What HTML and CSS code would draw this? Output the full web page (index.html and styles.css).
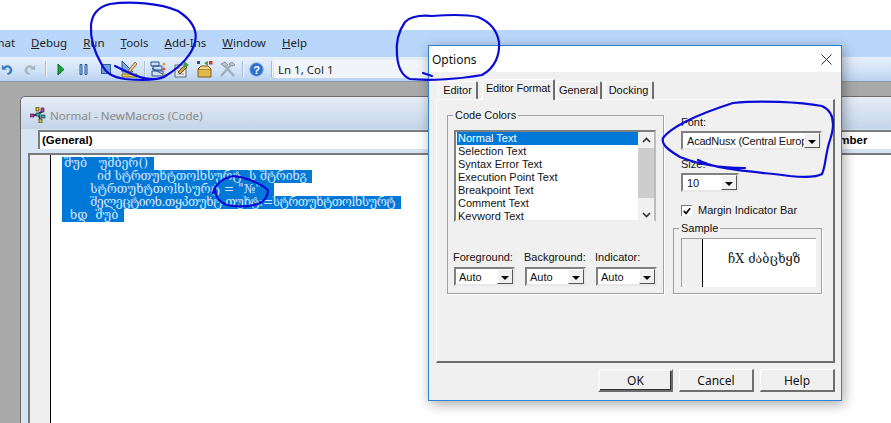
FILE: index.html
```html
<!DOCTYPE html>
<html lang="en">
<head>
<meta charset="utf-8">
<title>Options</title>
<link rel="stylesheet" href="styles.css">
</head>
<body>
<div class="screen">
  <div class="blank"></div>
  <nav class="menubar">
    <span class="menu first"><u>F</u>ormat</span>
    <span class="menu"><u>D</u>ebug</span>
    <span class="menu"><u>R</u>un</span>
    <span class="menu"><u>T</u>ools</span>
    <span class="menu"><u>A</u>dd-Ins</span>
    <span class="menu"><u>W</u>indow</span>
    <span class="menu"><u>H</u>elp</span>
  </nav>
  <div class="toolbar">
    <svg class="tb w-undo" viewBox="0 0 14 16"><path d="M1 3v6h6L5 7c3-2 6 0 5 3-.4 1.500-1.500 2.500-3 3l1 2c4-1 6-4 5-7C12 4 7 2 3.500 5.500L1 3z" fill="#3d7fc6"/></svg>
    <svg class="tb w-redo" viewBox="0 0 14 16"><path d="M13 3v6H7l2-2C6 5 3 7 4 10c.4 1.500 1.500 2.500 3 3l-1 2C2 14 0 11 1 8c1-4 6-6 9.500-2.500L13 3z" fill="#a9b4bf"/></svg>
    <i class="sep s1"></i>
    <svg class="tb w-play" viewBox="0 0 8 13"><path d="M1 1l6 5.500L1 12z" fill="#17a33a" stroke="#0c6d22"/></svg>
    <svg class="tb w-pause" viewBox="0 0 9 11"><path d="M1 .5h2v10H1zM6 .5h2v10H6z" fill="#9dbde3" stroke="#2a5d9c"/></svg>
    <svg class="tb w-stop" viewBox="0 0 10 10"><rect x=".5" y=".5" width="9" height="9" fill="#6f9fd8" stroke="#2a5d9c"/></svg>
    <svg class="tb w-design" viewBox="0 0 17 18"><path d="M1 1l11 11H1z" fill="#7ea6d8" stroke="#2a5d9c"/><path d="M7 11l7-9 2 2-7 8z" fill="#e8c9a0" stroke="#9a6a3a"/><path d="M1 14h15v3H1z" fill="#e2c35a" stroke="#8e7420"/></svg>
    <i class="sep s2"></i>
    <svg class="tb w-proj" viewBox="0 0 17 18"><path d="M1 2h8v4H1zM3 6h9v4H3zM2 11h11v5H2z" fill="#cfe0f4" stroke="#2a4e8c"/><path d="M2 8l12 7" stroke="#2a4e8c"/><circle cx="14" cy="4" r="1.500" fill="#e0a030"/><circle cx="14" cy="9" r="1.500" fill="#e0502a"/><circle cx="14" cy="15" r="1.500" fill="#e0a030"/></svg>
    <svg class="tb w-prop" viewBox="0 0 17 18"><path d="M2 5h11v12H2z" fill="#e8edf3" stroke="#59636f"/><path d="M4 8h7M4 11h7M4 14h7" stroke="#8b98a8"/><path d="M5 12l7-7 2 2-7 7z" fill="#d0a040" stroke="#7c5a1c"/><path d="M11 1l5 4-5 3z" fill="#3aa04a"/></svg>
    <svg class="tb w-obj" viewBox="0 0 17 18"><path d="M2 9h13v8H2z" fill="#e2b94e" stroke="#7a5c14"/><path d="M2 9l3-3h7l3 3" fill="#f1d98a" stroke="#7a5c14"/><rect x="1" y="1" width="3" height="3" fill="#334f80"/><path d="M8 3l4-2v5z" fill="#3aa04a"/><rect x="13" y="1" width="3.500" height="3.500" fill="#d0382a"/></svg>
    <svg class="tb w-tools" viewBox="0 0 17 18"><path d="M2 16L12 5M15 16L5 5" stroke="#a5aeb8" stroke-width="2.500" fill="none"/><path d="M2 4l4-2 3 3-3 2zM10 4l3-2 3 3-3 1z" fill="#bcc4cc" stroke="#8e98a3"/></svg>
    <i class="sep s3"></i>
    <svg class="tb w-help" viewBox="0 0 15 15"><circle cx="7.500" cy="7.500" r="6.800" fill="#2f6fd0" stroke="#8db3e4"/><text x="7.500" y="11.500" class="help-mark">?</text></svg>
    <i class="sep s4"></i>
    <div class="status">Ln 1, Col 1</div>
  </div>

  <main class="workspace">
    <section class="codewin">
      <header class="codewin-title">
        <svg class="vba-icon" viewBox="0 0 16 16"><path d="M2 9L8 7l5-3M8 7l2 5" stroke="#222" stroke-width="1.500" fill="none"/><rect x="6" y="0" width="3" height="4" fill="#d6c21c" stroke="#222" stroke-width=".6"/><rect x="11" y="1" width="3" height="4" fill="#d02cc0" stroke="#222" stroke-width=".6"/><rect x="0" y="7" width="4" height="3" fill="#d02cc0" stroke="#222" stroke-width=".6"/><rect x="6" y="6" width="4" height="3" fill="#19b3b3" stroke="#222" stroke-width=".6"/><rect x="11" y="8" width="4" height="3" fill="#19b3b3" stroke="#222" stroke-width=".6"/><rect x="9" y="12" width="3" height="4" fill="#d6c21c" stroke="#222" stroke-width=".6"/></svg>
        <span>Normal - NewMacros (Code)</span>
      </header>
      <div class="combos">
        <div class="objbox">(General)</div>
        <div class="procbox"><span>Number</span></div>
      </div>
      <div class="code">
        <div class="gutter"></div>
        <div class="lines">
          <div class="ln">შუბ   უმბერ()</div>
          <div class="ln i2">იმ სტრთუხტთოlნსურტ  ს შტრინგ</div>
          <div class="ln i3 assign">სტრთუხტთოlნსურტ = "№"</div>
          <div class="ln i3 call">შელეცტიონ.თყპთუხტ თუხტ:=სტრთუხტთოlნსურტ</div>
          <div class="ln i1">ნდ  შუბ</div>
        </div>
      </div>
    </section>
  </main>

  <div class="dialog">
    <header class="dlg-title"><span>Options</span>
      <svg class="close" viewBox="0 0 12 12"><path d="M.5.500l11 11M11.500.500l-11 11" stroke="#222" fill="none"/></svg>
    </header>
    <div class="dlg-body">
      <div class="tabs">
        <span class="tab t-ed">Editor</span>
        <span class="tab active">Editor Format</span>
        <span class="tab t-gen">General</span>
        <span class="tab t-dock">Docking</span>
      </div>
      <div class="panel">
        <fieldset class="group colors">
          <legend>Code Colors</legend>
          <div class="listbox">
            <ul class="items">
              <li class="sel">Normal Text</li>
              <li>Selection Text</li>
              <li>Syntax Error Text</li>
              <li>Execution Point Text</li>
              <li>Breakpoint Text</li>
              <li>Comment Text</li>
              <li>Keyword Text</li>
            </ul>
            <div class="scroll">
              <svg class="chev" viewBox="0 0 9 6"><path d="M1 5l3.500-3.500L8 5" stroke="#333" stroke-width="1.600" fill="none"/></svg>
              <div class="thumb"></div>
              <svg class="chev" viewBox="0 0 9 6"><path d="M1 1l3.500 3.500L8 1" stroke="#333" stroke-width="1.600" fill="none"/></svg>
            </div>
          </div>
          <div class="triple">
            <div class="pick"><label>Foreground:</label><div class="combo"><span>Auto</span><b class="arrow"></b></div></div>
            <div class="pick"><label>Background:</label><div class="combo"><span>Auto</span><b class="arrow"></b></div></div>
            <div class="pick"><label>Indicator:</label><div class="combo"><span>Auto</span><b class="arrow"></b></div></div>
          </div>
        </fieldset>
        <div class="right">
          <div class="form">
            <label class="lbl">Font:</label>
            <div class="combo font"><span>AcadNusx (Central Europ</span><b class="arrow"></b></div>
            <label class="lbl size-lbl">Size:</label>
            <div class="combo size"><span>10</span><b class="arrow"></b></div>
            <div class="check"><svg class="box" viewBox="0 0 11 11"><path d="M2 5.500l2.500 2.500L9 2.500" stroke="#111" stroke-width="2" fill="none"/></svg><span>Margin Indicator Bar</span></div>
          </div>
          <fieldset class="group sample">
            <legend>Sample</legend>
            <div class="sample-box"><div class="margin"></div><div class="sample-text">ჩX ძაბცხყზ</div></div>
          </fieldset>
        </div>
      </div>
      <div class="buttons">
        <button class="btn default">OK</button>
        <button class="btn">Cancel</button>
        <button class="btn">Help</button>
      </div>
    </div>
  </div>

  <svg class="ink" viewBox="0 0 891 423">
    <path d="M115 66C124 70 130 74 140 77C150 80 160 80 167 75C180 67 192 55 195 42C198 30 192 20 178 11C160 3 130 1 110 4C98 7 92 14 91 25C90 40 96 55 102 65C106 73 112 77 125 79C135 80 150 80 157 79"/>
    <path d="M423 73L432 76M432 16C420 15 410 17 405 22C398 32 396 45 397 55C398 68 402 76 410 79C430 81 460 79 482 75C495 68 500 55 499 42C497 30 490 22 478 17C465 14 445 15 432 16"/>
    <path d="M745 168C725 168 700 165 680 157C670 151 661 145 663 138C670 128 695 115 733 103C760 100 800 102 822 106C835 112 835 125 830 140C825 155 826 165 822 174C815 178 800 177 790 176C760 172 715 170 698 160"/>
    <path d="M213 193C215 185 220 179 233 176C245 177 260 183 268 190C268 197 265 201 258 204C248 207 235 207 227 205C218 202 215 195 215 187"/>
  </svg>
</div>
</body>
</html>
```
FILE: styles.css
```css
* { box-sizing: border-box; }
html, body { margin: 0; padding: 0; }
body { width: 891px; height: 423px; overflow: hidden; background: #fff; font-family: "Liberation Sans", sans-serif; }
.screen { position: relative; width: 891px; height: 423px; overflow: hidden; display: flex; flex-direction: column; }
.blank { height: 30px; flex: none; background: #fff; }

.menubar { height: 27px; flex: none; background: #b9d7fa; display: flex; align-items: center; gap: 16px; margin-left: -24px; padding-bottom: 3px; width: 915px; font: 11.500px "Noto Sans", sans-serif; color: #222; }
.menu { white-space: nowrap; }

.toolbar { height: 25px; flex: none; position: relative; display: flex; align-items: center; background: linear-gradient(#e7f0fb, #cfe2f8 60%, #b9d2ef); border-bottom: 1px solid #8d9aa8; }
.tb { flex: none; display: block; }
.w-undo { width: 12px; height: 14px; margin-left: 1px; }
.w-redo { width: 12px; height: 14px; margin-left: 11px; }
.sep { flex: none; width: 1px; height: 16px; background: #a8bcd4; border-right: 1px solid #f2f7fd; box-sizing: content-box; }
.s1 { margin-left: 9px; }
.w-play { width: 8px; height: 13px; margin-left: 10px; }
.w-pause { width: 9px; height: 11px; margin-left: 14px; }
.w-stop { width: 10px; height: 10px; margin-left: 13px; }
.w-design { width: 17px; height: 18px; margin-left: 10px; }
.s2 { margin-left: 6px; }
.w-proj { width: 17px; height: 18px; margin-left: 4px; }
.w-prop { width: 17px; height: 18px; margin-left: 6px; }
.w-obj { width: 17px; height: 18px; margin-left: 6px; }
.w-tools { width: 17px; height: 18px; margin-left: 6px; }
.s3 { margin-left: 6px; }
.w-help { width: 15px; height: 15px; margin-left: 5px; }
.help-mark { font: bold 11px "Liberation Sans", sans-serif; fill: #fff; text-anchor: middle; }
.s4 { margin-left: 7px; }
.status { flex: none; margin-left: 1px; width: 156px; height: 18px; background: #f1f5fa; padding-left: 4px; font: 11.500px/20px "Noto Sans", sans-serif; color: #222; }

.workspace { flex: 1; background: #a9a9a9; padding: 14px 0 0 20px; min-height: 0; }
.codewin { width: 900px; height: 400px; border: 1px solid #6c6c6c; border-radius: 5px 0 0 0; background: #d6e4f3; display: flex; flex-direction: column; }
.codewin-title { height: 32px; flex: none; display: flex; align-items: center; padding: 4px 0 0 9px; gap: 4px; font: 11.600px "Noto Sans", sans-serif; color: #8a8a8a; background: linear-gradient(#e6edf5, #c4d5e8); border-radius: 5px 0 0 0; }
.vba-icon { width: 16px; height: 16px; flex: none; }
.combos { height: 24px; flex: none; display: flex; background: #d6e4f3; padding: 1px 0 0 17px; }
.objbox { width: 400px; height: 19px; background: #fff; border-top: 2px solid #7c7c7c; border-left: 2px solid #7c7c7c; padding-left: 2px; font: bold 11.500px/16px "Liberation Sans", sans-serif; color: #000; }
.procbox { flex: 1; height: 19px; background: #fff; border-top: 2px solid #7c7c7c; font: bold 11.500px/16px "Liberation Sans", sans-serif; color: #000; padding-left: 386px; }
.code { flex: 1; display: flex; margin-left: 7px; border-left: 2px solid #7a7a7a; border-top: 2px solid #7a7a7a; background: #fff; }
.gutter { width: 20px; flex: none; background: #efefef; }
.lines { flex: 1; border-left: 1px solid #000; padding: 2px 0 0 11px; font: 12.300px/13px "DejaVu Serif", serif; color: #d5e5f8; }
.ln { width: fit-content; background: #0078d7; white-space: pre; height: 13px; overflow: hidden; padding-left: 2px; padding-right: 6px; }
.i1 { padding-left: 8px; }
.i2 { padding-left: 35px; letter-spacing: -.2px; }
.i3 { padding-left: 28px; }
.assign { padding-right: 13px; }
.call { letter-spacing: -.5px; }

.dialog { position: absolute; left: 428px; top: 45px; width: 414px; height: 356px; border: 1px solid #2b82d4; background: #f0f0f0; box-shadow: 2px 3px 12px rgba(0,0,0,.35); display: flex; flex-direction: column; font: 11px "Liberation Sans", sans-serif; color: #111; }
.dlg-title { height: 26px; flex: none; background: #fff; display: flex; align-items: center; justify-content: space-between; padding: 0 9px 0 3px; font: 12px "Noto Sans", sans-serif; color: #111; }
.close { width: 11px; height: 11px; }
.dlg-body { flex: 1; padding: 6px 6px 0 7px; display: flex; flex-direction: column; }
.tabs { height: 21px; flex: none; display: flex; align-items: flex-end; padding-left: 2px; }
.tab { height: 18px; padding: 2px 0 0; background: #f0f0f0; border-top: 1px solid #fff; border-left: 1px solid #fff; border-right: 2px solid #6d6d6d; white-space: nowrap; text-align: center; border-radius: 2px 2px 0 0; }
.t-ed { width: 40px; margin-right: 4px; }
.active { height: 21px; width: 73px; padding-top: 2px; position: relative; top: 1px; z-index: 1; letter-spacing: -.2px; margin-right: 1px; }
.t-gen { width: 46px; margin-right: 2px; }
.t-dock { width: 50px; }
.panel { height: 264px; flex: none; border: 1px solid #fff; border-right: 2px solid #6d6d6d; border-bottom: 2px solid #6d6d6d; display: flex; align-items: flex-start; padding: 9px 0 0 10px; gap: 9px; }
.group { margin: 0; padding: 0; border: 1px solid #a0a0a0; box-shadow: 1px 1px 0 #fff; min-width: 0; }
.group legend { padding: 0 2px; line-height: 13px; font-size: 11px; }
.colors { width: 217px; height: 185px; padding: 8px 0 0 6px; }
.colors legend { margin-left: -1px; }
.listbox { width: 202px; height: 92px; background: #fff; border: 2px solid #808080; border-right-color: #bcbcbc; border-bottom-color: #eee; display: flex; overflow: hidden; }
.items { list-style: none; margin: 0; padding: 0 0 0 1px; flex: 1; font: 11px/13px "Liberation Sans", sans-serif; }
.items li { height: 13px; padding-left: 1px; white-space: nowrap; }
.items .sel { background: #0078d7; color: #fff; }
.scroll { width: 16px; flex: none; background: #f0f0f0; display: flex; flex-direction: column; align-items: center; justify-content: space-between; padding: 5px 0 2px; }
.chev { width: 9px; height: 6px; }
.thumb { width: 16px; flex: 1; background: #cdcdcd; margin: 5px 0 14px; }
.triple { display: flex; gap: 10px; margin-top: 29px; }
.pick { width: 61px; }
.pick label { display: block; height: 16px; line-height: 13px; white-space: nowrap; margin-left: -1px; }
.combo { height: 19px; background: #fff; display: flex; border: 2px solid #808080; border-right-color: #e8e8e8; border-bottom-color: #e8e8e8; align-items: stretch; padding-left: 3px; line-height: 15px; }
.combo span { flex: 1; overflow: hidden; white-space: nowrap; padding-top: 1px; }
.arrow { width: 16px; flex: none; background: #f0f0f0; border: 1px solid #fff; border-right-color: #555; border-bottom-color: #555; position: relative; }
.arrow::after { content: ""; position: absolute; left: 3px; top: 6px; border: 4px solid transparent; border-top: 4px solid #000; border-bottom: 0; }
.right { width: 149px; flex: none; display: flex; flex-direction: column; }
.form { padding: 7px 0 0 8px; height: 113px; }
.lbl { display: block; height: 15px; line-height: 13px; }
.font { width: 141px; padding-left: 4px; }
.font span { letter-spacing: -.2px; }
.size-lbl { margin-top: 8px; }
.size { width: 58px; padding-left: 4px; }
.check { display: flex; align-items: center; gap: 6px; margin-top: 12px; }
.box { width: 11px; height: 11px; background: #fff; border-top: 1px solid #777; border-left: 1px solid #777; flex: none; }
.sample { height: 72px; padding: 3px 0 0 7px; }
.sample legend { margin-left: -2px; }
.sample-box { width: 135px; height: 49px; border-top: 1px solid #a0a0a0; border-left: 1px solid #a0a0a0; background: #fff; display: flex; }
.margin { width: 20px; flex: none; background: #f0f0f0; }
.sample-text { flex: 1; border-left: 1px solid #000; padding: 12px 0 0 25px; font: 12.500px/16px "DejaVu Serif", serif; color: #222; white-space: nowrap; overflow: hidden; }
.buttons { display: flex; gap: 6px; padding: 6px 0 0 162px; }
.btn { width: 75px; height: 23px; padding: 0; background: #f0f0f0; border: 1px solid #fff; border-right: 2px solid #6d6d6d; border-bottom: 2px solid #6d6d6d; font: 12px "Noto Sans", sans-serif; color: #111; }
.default { border: 2px solid #6d6d6d; border-top-color: #f8f8f8; border-left-color: #f8f8f8; box-shadow: inset -1px -1px 0 #333; }

.ink { position: absolute; left: 0; top: 0; width: 891px; height: 423px; pointer-events: none; }
.ink path { fill: none; stroke: #0b0bd6; stroke-width: 2.200; stroke-linecap: round; stroke-linejoin: round; }
```
